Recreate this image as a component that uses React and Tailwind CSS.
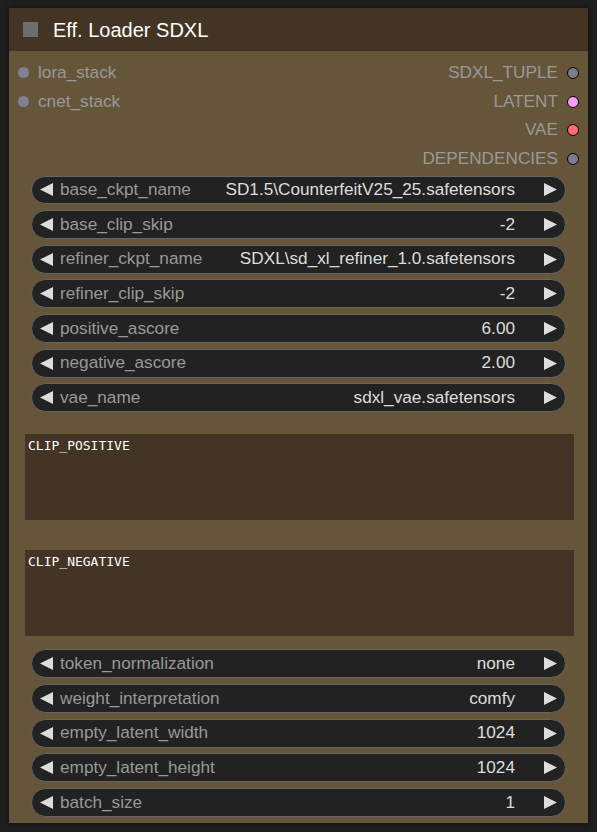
import React from 'react';

const inputs = [
  { name: 'lora_stack', color: 'bg-[#7f7f96]' },
  { name: 'cnet_stack', color: 'bg-[#7f7f96]' },
];

const outputs = [
  { name: 'SDXL_TUPLE', color: 'bg-[#7d7d8f]' },
  { name: 'LATENT', color: 'bg-[#ff9cf9]' },
  { name: 'VAE', color: 'bg-[#ff6e6e]' },
  { name: 'DEPENDENCIES', color: 'bg-[#7d7d8f]' },
];

const topWidgets = [
  ['base_ckpt_name', 'SD1.5\\CounterfeitV25_25.safetensors'],
  ['base_clip_skip', '-2'],
  ['refiner_ckpt_name', 'SDXL\\sd_xl_refiner_1.0.safetensors'],
  ['refiner_clip_skip', '-2'],
  ['positive_ascore', '6.00'],
  ['negative_ascore', '2.00'],
  ['vae_name', 'sdxl_vae.safetensors'],
];

const bottomWidgets = [
  ['token_normalization', 'none'],
  ['weight_interpretation', 'comfy'],
  ['empty_latent_width', '1024'],
  ['empty_latent_height', '1024'],
  ['batch_size', '1'],
];

function Arrow({ dir }) {
  return (
    <svg width="13" height="13" viewBox="0 0 13 13" className="shrink-0">
      {dir === 'left'
        ? <polygon points="13,0 13,13 0,6.5" fill="#dddddd" />
        : <polygon points="0,0 0,13 13,6.5" fill="#dddddd" />}
    </svg>
  );
}

function Widget({ label, value }) {
  return (
    <div className="h-[34.67px] flex items-center px-[22px]">
      <div className="w-full h-[28.9px] rounded-full bg-[#222222] border border-[#666666] flex items-center pl-[8px] pr-[8px]">
        <Arrow dir="left" />
        <span className="ml-[7px] text-[#999999] whitespace-nowrap">{label}</span>
        <span className="ml-auto text-[#dddddd] whitespace-nowrap">{value}</span>
        <span className="ml-[29px]"><Arrow dir="right" /></span>
      </div>
    </div>
  );
}

function TextBox({ text }) {
  return (
    <div className="ml-[16px] mr-[14px] h-[86px] bg-[#433425] px-[3px] pt-[4px]">
      <div className="text-white text-[13px] leading-[15px]" style={{ fontFamily: '"DejaVu Sans Mono", "Liberation Mono", monospace' }}>{text}</div>
    </div>
  );
}

export default function App() {
  return (
    <div className="w-[597px] h-[832px] bg-[#1f1f1f] relative overflow-hidden" style={{ fontFamily: '"Liberation Sans", Arial, sans-serif' }}>
      <div className="absolute left-[9px] top-[8px] w-[579px] h-[815px] bg-[#655539] shadow-[0_0_6px_rgba(0,0,0,0.6)] text-[17.2px]">
        {/* title */}
        <div className="h-[43.3px] bg-[#443424] flex items-center">
          <div className="ml-[14px] w-[15px] h-[15px] bg-[#6e6e6e]" />
          <span className="ml-[15px] text-[20px] text-white">Eff. Loader SDXL</span>
        </div>

        {/* slots */}
        <div className="flex pt-[7.3px]">
          <div className="flex-1">
            {inputs.map((s) => (
              <div key={s.name} className="h-[28.67px] flex items-center">
                <div className={`ml-[9px] w-[11px] h-[11px] rounded-full ${s.color}`} />
                <span className="ml-[9px] text-[#999999]">{s.name}</span>
              </div>
            ))}
          </div>
          <div className="flex-1">
            {outputs.map((s) => (
              <div key={s.name} className="h-[28.67px] flex items-center justify-end">
                <span className="mr-[9px] text-[#999999]">{s.name}</span>
                <div className={`mr-[9px] w-[12px] h-[12px] rounded-full border border-black ${s.color}`} />
              </div>
            ))}
          </div>
        </div>

        {/* widgets */}
        <div className="-mt-[0.6px]">
          {topWidgets.map(([l, v]) => <Widget key={l} label={l} value={v} />)}
        </div>

        <div className="mt-[18.7px]">
          <TextBox text="CLIP_POSITIVE" />
        </div>
        <div className="mt-[30px]">
          <TextBox text="CLIP_NEGATIVE" />
        </div>

        <div className="mt-[10.7px]">
          {bottomWidgets.map(([l, v]) => <Widget key={l} label={l} value={v} />)}
        </div>
      </div>
    </div>
  );
}
